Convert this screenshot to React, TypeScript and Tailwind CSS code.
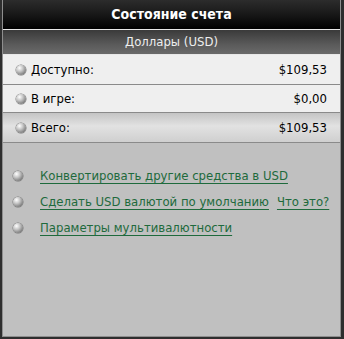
import * as React from 'react';

const Bullet = () => (
  <span className="inline-block w-[10px] h-[10px] rounded-full shrink-0 bg-[radial-gradient(circle_at_35%_30%,#ffffff_0%,#c8c8c8_35%,#6a6a6a_85%,#4a4a4a_100%)] shadow-[0_0_0_0.5px_#777]" />
);

const Row = ({ label, value, className }: { label: string; value: string; className: string }) => (
  <div className={`flex items-center justify-between pl-[13px] pr-[13px] border-b border-[#8a8a8a] ${className}`}>
    <div className="flex items-center gap-[5px]">
      <Bullet />
      <span className="text-[13px] text-black">{label}</span>
    </div>
    <span className="text-[13px] text-black">{value}</span>
  </div>
);

const LinkRow = ({ children }: { children: React.ReactNode }) => (
  <div className="flex items-center h-[26px] pl-[10px]">
    <Bullet />
    <div className="ml-[17px] flex items-center gap-[8px]">{children}</div>
  </div>
);

const A = ({ children }: { children: React.ReactNode }) => (
  <a href="#" className="text-[13px] text-[#1e6a3c] underline underline-offset-[3px] decoration-[#1e6a3c]">
    {children}
  </a>
);

export default function App() {
  return (
    <div
      className="w-[344px] h-[339px] bg-[#2e2e2e] pl-[2px] pr-[3px] pb-[2px]"
      style={{ fontFamily: '"DejaVu Sans Condensed", "DejaVu Sans", sans-serif' }}
    >
      <div className="h-full flex flex-col border-l border-r border-b border-[#8e8e8e] bg-[#c0c0c0]">
        {/* Header */}
        <div className="h-[30px] flex items-center justify-center bg-[linear-gradient(#2c2c2c,#1a1a1a_45%,#000000)] border-b border-[#e8e8e8]">
          <span className="text-[14px] font-bold text-white">Состояние счета</span>
        </div>
        {/* Currency */}
        <div className="h-[25px] flex items-center justify-center bg-[linear-gradient(#3a3a3a,#5a5a5a_60%,#6a6a6a)] border-b border-[#e8e8e8]">
          <span className="text-[13px] text-[#eeeeee]">Доллары (USD)</span>
        </div>
        <Row label="Доступно:" value="$109,53" className="h-[30px] bg-[#efefef]" />
        <Row label="В игре:" value="$0,00" className="h-[28px] bg-[#efefef]" />
        <Row
          label="Всего:"
          value="$109,53"
          className="h-[30px] bg-[linear-gradient(#c4c4c4,#e2e2e2_45%,#cfcfcf)]"
        />
        {/* Links */}
        <div className="flex flex-col pt-[20px]">
          <LinkRow>
            <A>Конвертировать другие средства в USD</A>
          </LinkRow>
          <LinkRow>
            <A>Сделать USD валютой по умолчанию</A>
            <A>Что это?</A>
          </LinkRow>
          <LinkRow>
            <A>Параметры мультивалютности</A>
          </LinkRow>
        </div>
      </div>
    </div>
  );
}
